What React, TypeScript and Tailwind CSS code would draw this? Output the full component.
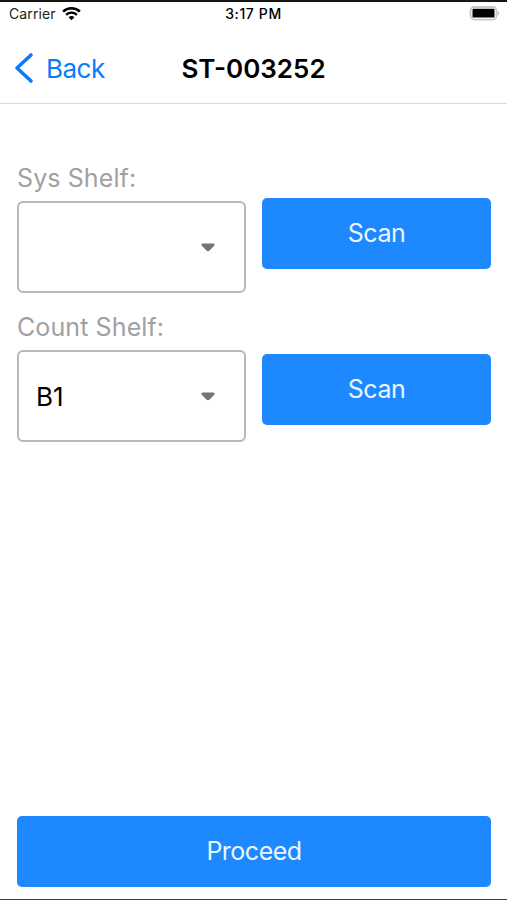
import { useState } from "react";

type ShelfSelectProps = {
  label: string;
  value: string;
};

type ButtonProps = {
  title: string;
  className?: string;
  onClick?: () => void;
};

function WifiIcon() {
  return (
    <svg width="19" height="14" viewBox="0 0 19 14" fill="none" stroke="black">
      <path d="M1.1 4.6C5.8 0.2 13.2 0.2 17.9 4.6" strokeWidth="2.6" />
      <path d="M4.1 7.8C7.1 5 11.9 5 14.9 7.8" strokeWidth="2.3" />
      <path d="M6.6 10.2C8.2 8.7 10.8 8.7 12.4 10.2L9.5 13.2Z" fill="black" stroke="none" />
    </svg>
  );
}

function BatteryIcon() {
  return (
    <svg width="31" height="15" viewBox="0 0 31 15" fill="none">
      <rect x="1.5" y="1" width="26" height="12.6" rx="3.8" stroke="#c8c8c8" strokeWidth="1.8" />
      <rect x="3.5" y="2.8" width="22" height="8.8" rx="1.2" fill="black" />
      <path d="M28.8 5.2C30.6 5.9 30.6 8.7 28.8 9.4Z" fill="#b5b5b5" />
    </svg>
  );
}

function ShelfSelect({ label, value }: ShelfSelectProps) {
  return (
    <div className="flex flex-col">
      <p className="h-[38px] text-[25px] leading-[30px] tracking-[0.1px] text-[#a1a1a1]">{label}</p>
      <button className="flex h-[92px] w-full items-center justify-between rounded-md border-2 border-[#b8b8b8] pr-[29px] pl-[17px] text-[26px] text-black">
        <span>{value}</span>
        <svg width="14" height="9" viewBox="0 0 14 9" fill="#757575">
          <path d="M1.7 0.5H12.3C13.6 0.5 14 1.8 13.2 2.7L8.6 7.5C7.6 8.6 6.4 8.6 5.4 7.5L0.8 2.7C0 1.8 0.4 0.5 1.7 0.5Z" />
        </svg>
      </button>
    </div>
  );
}

function Button({ title, className = "", onClick }: ButtonProps) {
  return (
    <button
      className={`flex h-[71px] w-full items-center justify-center rounded-[5px] bg-[#1e88ff] pt-px text-[25px] tracking-[-0.5px] text-[#eaf6ff] ${className}`}
      onClick={onClick}
    >
      {title}
    </button>
  );
}

export default function App() {
  const [sysShelf, setSysShelf] = useState("");
  const [countShelf, setCountShelf] = useState("B1");

  return (
    <div className="flex h-[900px] w-[507px] flex-col border-t-2 border-b border-t-[#161616] border-b-[#404040] bg-white font-['Inter',sans-serif]">
      {/* Status bar */}
      <div className="grid h-[23px] grid-cols-3 items-center px-[9px] text-[14px] text-black">
        <div className="flex items-center gap-1.5 tracking-[0.1px]">
          <span className="text-[#222]">Carrier</span>
          <WifiIcon />
        </div>
        <span className="text-center font-medium tracking-[0.6px]">3:17 PM</span>
        <div className="-mr-0.5 flex justify-end">
          <BatteryIcon />
        </div>
      </div>

      {/* Navigation header */}
      <header className="grid h-[79px] grid-cols-3 items-center border-b border-[#d9d9d9] pt-2">
        <button className="flex items-center gap-3 pl-3.5 text-[26px] tracking-[-0.5px] text-[#087cfa]">
          <svg width="20" height="32" viewBox="0 0 20 32" fill="none" stroke="currentColor">
            <path d="M17 3L3 16L17 29" strokeWidth="3.6" strokeLinecap="round" strokeLinejoin="round" />
          </svg>
          Back
        </button>
        <h1 className="text-center text-[26px] font-semibold whitespace-nowrap text-black">ST-003252</h1>
      </header>

      <main className="flex grow flex-col px-4 pt-[59px] pb-3">
        <div className="grid grid-cols-2 gap-x-4 gap-y-[19px] pl-px">
          <ShelfSelect label="Sys Shelf:" value={sysShelf} />
          <Button title="Scan" className="mt-[35px]" onClick={() => setSysShelf("")} />
          <ShelfSelect label="Count Shelf:" value={countShelf} />
          <Button title="Scan" className="mt-[42px]" onClick={() => setCountShelf("B1")} />
        </div>

        <div className="mt-auto pl-px">
          <Button title="Proceed" />
        </div>
      </main>
    </div>
  );
}
